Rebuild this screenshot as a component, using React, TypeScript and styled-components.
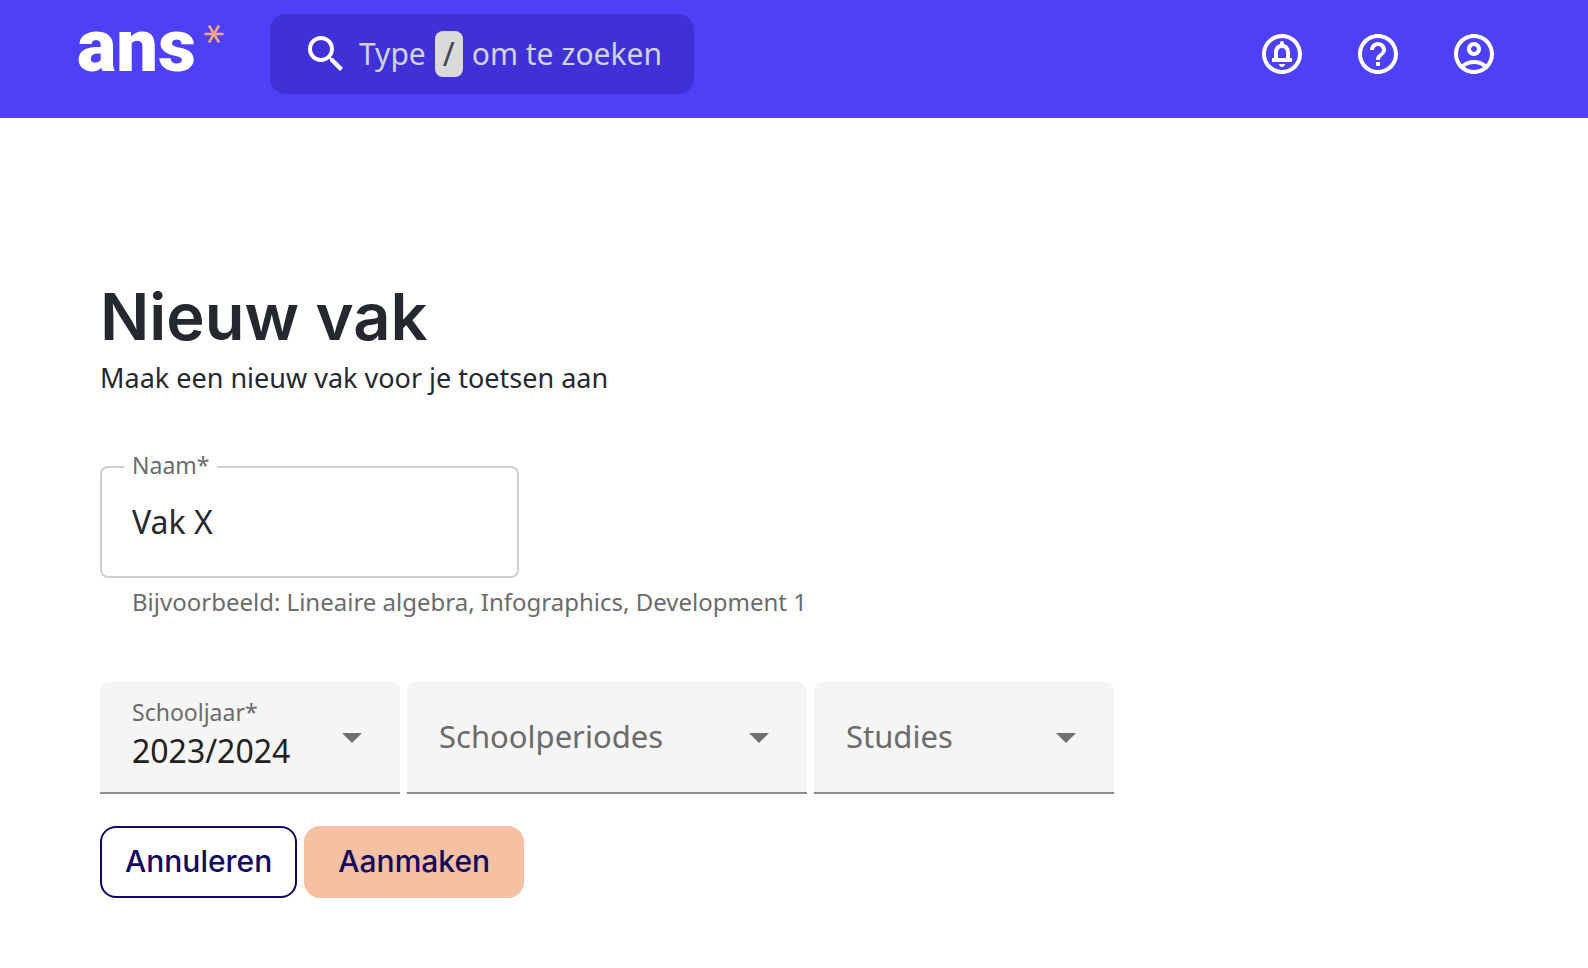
import React, { useState } from "react";
import styled, { createGlobalStyle, css } from "styled-components";
import {
  MdSearch,
  MdOutlineCircleNotifications,
  MdHelpOutline,
  MdOutlineAccountCircle,
} from "react-icons/md";

const bodyFont = `"Noto Sans", "Open Sans", sans-serif`;
const displayFont = `Inter, "Open Sans", sans-serif`;

const GlobalStyle = createGlobalStyle`
  *, *::before, *::after { box-sizing: border-box; }
  body {
    margin: 0;
    background: #ffffff;
    color: #25282f;
    font-family: ${bodyFont};
  }
`;

const TopBar = styled.header`
  display: flex;
  align-items: flex-start;
  padding: 14px 66px 24px 77px;
  background: #4e40f5;
`;

const Logo = styled.a`
  display: flex;
  align-items: flex-start;
  gap: 8px;
  margin-right: 46px;
  color: #ffffff;
  font-family: Roboto, "Open Sans", sans-serif;
  font-size: 74px;
  font-weight: 900;
  line-height: 64px;
  text-decoration: none;
`;

const LogoMark = styled.svg`
  width: 20px;
  height: 20px;
  margin-top: 10px;
`;

const SearchButton = styled.button`
  display: flex;
  align-items: center;
  gap: 9px;
  height: 80px;
  padding: 0 32px;
  border: 0;
  border-radius: 16px;
  background: #3f31d7;
  color: #cfd3dc;
  font-family: ${bodyFont};
  font-size: 30px;
  line-height: 40px;
  white-space: nowrap;
  cursor: pointer;

  svg {
    color: #ffffff;
  }
`;

const Key = styled.kbd`
  width: 28px;
  border-radius: 8px;
  background: #dadada;
  color: #3f474f;
  font-family: ${bodyFont};
  font-size: 32px;
  line-height: 46px;
  text-align: center;
`;

const Actions = styled.nav`
  display: flex;
  margin-left: auto;
`;

const IconButton = styled.button`
  display: grid;
  place-items: center;
  width: 96px;
  height: 80px;
  padding: 0;
  border: 0;
  background: none;
  color: #ffffff;
  cursor: pointer;
`;

const Page = styled.main`
  padding: 158px 100px 64px;
`;

const Title = styled.h1`
  margin: 0;
  font-family: ${displayFont};
  font-size: 65px;
  font-weight: 600;
  line-height: 82px;
`;

const Subtitle = styled.p`
  margin: 0;
  font-size: 27px;
  line-height: 40px;
`;

const Form = styled.form`
  margin-top: 68px;
`;

const OutlinedField = styled.div`
  position: relative;
  width: 419px;
  max-width: 100%;
`;

const OutlinedLabel = styled.label`
  position: absolute;
  top: -17px;
  left: 24px;
  padding: 0 8px;
  background: #ffffff;
  color: #6b6b6b;
  font-size: 23px;
  line-height: 32px;
`;

const TextInput = styled.input`
  display: block;
  width: 100%;
  height: 112px;
  padding: 0 30px 2px;
  border: 2px solid #cecece;
  border-radius: 8px;
  background: #ffffff;
  color: #25282f;
  font-family: ${bodyFont};
  font-size: 32px;
  outline: none;

  &:focus {
    border-color: #4e40f5;
  }
`;

const Hint = styled.p`
  margin: 8px 0 0;
  padding-left: 32px;
  color: #6b6b6b;
  font-size: 24px;
  line-height: 32px;
`;

const SelectRow = styled.div`
  display: flex;
  flex-wrap: wrap;
  gap: 7px;
  margin-top: 64px;
`;

const SelectBox = styled.div<{ $wide?: boolean }>`
  position: relative;
  width: ${(p) => (p.$wide ? 400 : 300)}px;
`;

const FloatingLabel = styled.label`
  position: absolute;
  top: 16px;
  left: 32px;
  color: #6b6b6b;
  font-size: 23px;
  line-height: 28px;
  pointer-events: none;
`;

const Select = styled.select<{ $filled?: boolean }>`
  display: block;
  width: 100%;
  height: 112px;
  padding: 0 64px 2px 32px;
  border: 0;
  border-bottom: 2px solid #8c8c8c;
  border-radius: 8px 8px 0 0;
  background: #f5f5f5;
  color: #6b6b6b;
  font-family: ${bodyFont};
  font-size: 31px;
  appearance: none;
  outline: none;

  ${(p) =>
    p.$filled &&
    css`
      padding-top: 28px;
      color: #212121;
      font-size: 32px;
    `}
`;

const Caret = styled.svg`
  position: absolute;
  top: 51px;
  right: 38px;
  width: 20px;
  height: 10px;
  fill: #707070;
  pointer-events: none;
`;

const ButtonRow = styled.div`
  display: flex;
  gap: 7px;
  margin-top: 32px;
`;

const Button = styled.button<{ $primary?: boolean }>`
  height: 72px;
  padding: ${(p) => (p.$primary ? "0 32px 2px" : "0 23px 2px")};
  border: 2px solid ${(p) => (p.$primary ? "#f6c0a3" : "#120a5f")};
  border-radius: 16px;
  background: ${(p) => (p.$primary ? "#f6c0a3" : "#ffffff")};
  color: #120a5f;
  font-family: ${displayFont};
  font-size: 30px;
  font-weight: 500;
  line-height: 40px;
  cursor: pointer;
`;

interface DropdownProps {
  id: string;
  label: string;
  options: string[];
  value?: string;
  wide?: boolean;
}

function Dropdown({ id, label, options, value = "", wide }: DropdownProps) {
  const [selected, setSelected] = useState(value);
  const filled = selected !== "";
  return (
    <SelectBox $wide={wide}>
      {filled && <FloatingLabel htmlFor={id}>{label}</FloatingLabel>}
      <Select
        id={id}
        aria-label={label}
        $filled={filled}
        value={selected}
        onChange={(e) => setSelected(e.target.value)}
      >
        {!value && <option value="">{label}</option>}
        {options.map((option) => (
          <option key={option}>{option}</option>
        ))}
      </Select>
      <Caret viewBox="0 0 20 10" aria-hidden="true">
        <path d="M0 0h20L10 10z" />
      </Caret>
    </SelectBox>
  );
}

export default function App() {
  const [name, setName] = useState("Vak X");

  return (
    <>
      <GlobalStyle />
      <TopBar>
        <Logo href="#">
          ans
          <LogoMark viewBox="0 0 20 20" aria-hidden="true">
            <path
              d="M.5 10h19M5 1.5l10 17M15 1.5l-10 17"
              fill="none"
              stroke="#f3a683"
              strokeWidth="2.5"
            />
          </LogoMark>
        </Logo>
        <SearchButton type="button">
          <MdSearch size={48} />
          <span>Type</span>
          <Key>/</Key>
          <span>om te zoeken</span>
        </SearchButton>
        <Actions>
          <IconButton type="button" aria-label="Meldingen">
            <MdOutlineCircleNotifications size={48} />
          </IconButton>
          <IconButton type="button" aria-label="Help">
            <MdHelpOutline size={48} />
          </IconButton>
          <IconButton type="button" aria-label="Account">
            <MdOutlineAccountCircle size={48} />
          </IconButton>
        </Actions>
      </TopBar>
      <Page>
        <Title>Nieuw vak</Title>
        <Subtitle>Maak een nieuw vak voor je toetsen aan</Subtitle>
        <Form onSubmit={(e) => e.preventDefault()}>
          <OutlinedField>
            <TextInput
              id="name"
              aria-describedby="name-hint"
              value={name}
              onChange={(e) => setName(e.target.value)}
            />
            <OutlinedLabel htmlFor="name">Naam*</OutlinedLabel>
          </OutlinedField>
          <Hint id="name-hint">
            Bijvoorbeeld: Lineaire algebra, Infographics, Development 1
          </Hint>
          <SelectRow>
            <Dropdown
              id="year"
              label="Schooljaar*"
              value="2023/2024"
              options={["2023/2024"]}
            />
            <Dropdown id="periods" label="Schoolperiodes" options={[]} wide />
            <Dropdown id="studies" label="Studies" options={[]} />
          </SelectRow>
          <ButtonRow>
            <Button type="button">Annuleren</Button>
            <Button type="submit" $primary>
              Aanmaken
            </Button>
          </ButtonRow>
        </Form>
      </Page>
    </>
  );
}
